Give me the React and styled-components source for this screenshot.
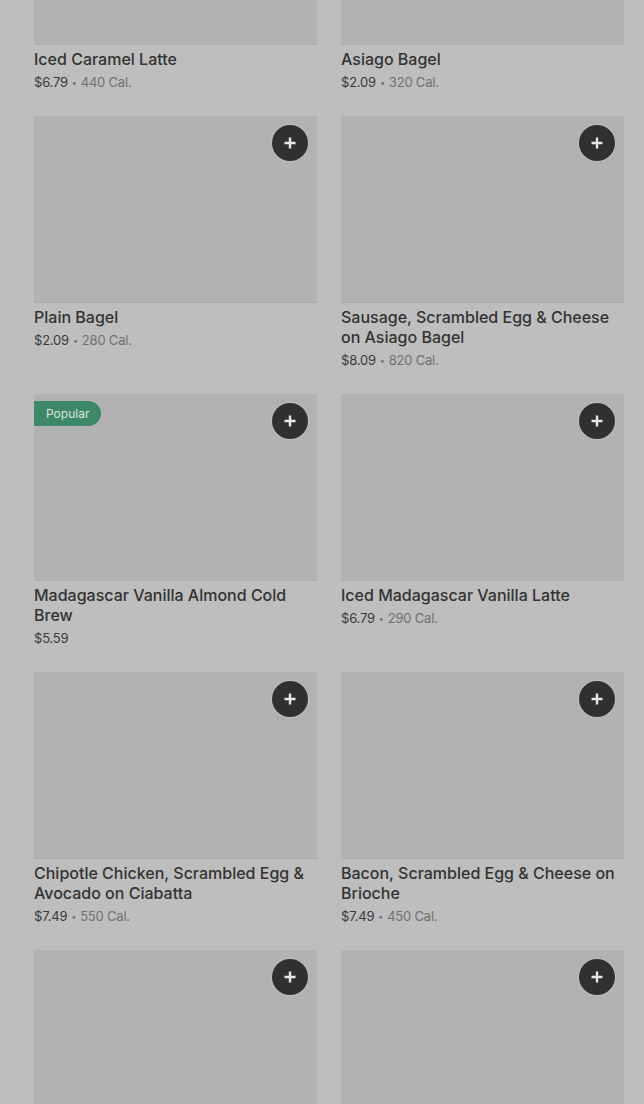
import React from "react";
import styled, { createGlobalStyle } from "styled-components";

const GlobalStyle = createGlobalStyle`
  html, body {
    margin: 0;
    padding: 0;
    background: #bebebe;
    overflow: hidden;
  }
  body {
    font-family: Inter, "Noto Sans", sans-serif;
  }
`;

const Page = styled.div`
  height: 1104px;
  overflow: hidden;
  background: #bebebe;
`;

const Grid = styled.div`
  display: grid;
  grid-template-columns: 283px 283px;
  column-gap: 24px;
  row-gap: 24px;
  padding: 0 20px 0 34px;
  margin-top: -142px;
`;

const Card = styled.div`
  display: flex;
  flex-direction: column;
`;

const Thumb = styled.div`
  position: relative;
  height: 187px;
  background: #b2b2b2;
  box-shadow: inset 0 -1px 0 rgba(0, 0, 0, 0.04);
`;

const Badge = styled.span`
  position: absolute;
  top: 7px;
  left: 0;
  height: 25px;
  padding: 0 12px;
  display: flex;
  align-items: center;
  font-size: 12px;
  color: #d9e6df;
  background: #3d8866;
  border-radius: 0 13px 13px 0;
`;

const AddButton = styled.button`
  position: absolute;
  top: 9px;
  right: 9px;
  width: 36px;
  height: 36px;
  border: none;
  border-radius: 50%;
  background: #303030;
  box-shadow: 0 0 0 1px rgba(255, 255, 255, 0.15);
  display: flex;
  align-items: center;
  justify-content: center;
  padding: 0;
`;

const Title = styled.div`
  margin-top: 4px;
  font-size: 16px;
  line-height: 20px;
  font-weight: 500;
  color: #333;
`;

const Meta = styled.div`
  margin-top: 3px;
  height: 20px;
  display: flex;
  align-items: center;
  font-size: 13px;
  line-height: 20px;
  letter-spacing: -0.2px;
  color: #3a3a3a;
`;

const Cal = styled.span`
  color: #707070;
`;

const Dot = styled.span`
  margin: 0 4px;
  font-size: 9px;
  line-height: 1;
  color: #707070;
`;

const items = [
  { name: "Iced Caramel Latte", price: "$6.79", cal: "440 Cal." },
  { name: "Asiago Bagel", price: "$2.09", cal: "320 Cal." },
  { name: "Plain Bagel", price: "$2.09", cal: "280 Cal." },
  { name: "Sausage, Scrambled Egg & Cheese on Asiago Bagel", price: "$8.09", cal: "820 Cal." },
  { name: "Madagascar Vanilla Almond Cold Brew", price: "$5.59", popular: true },
  { name: "Iced Madagascar Vanilla Latte", price: "$6.79", cal: "290 Cal." },
  { name: "Chipotle Chicken, Scrambled Egg & Avocado on Ciabatta", price: "$7.49", cal: "550 Cal." },
  { name: "Bacon, Scrambled Egg & Cheese on Brioche", price: "$7.49", cal: "450 Cal." },
  { name: "", price: "" },
  { name: "", price: "" },
];

const Plus = () => (
  <svg width="14" height="14" viewBox="0 0 14 14">
    <path d="M7 1.5v11M1.5 7h11" stroke="#e6e6e6" strokeWidth="2.4" />
  </svg>
);

const App = () => {
  return (
    <>
      <GlobalStyle />
      <Page>
        <Grid>
          {items.map((item, i) => (
            <Card key={i}>
              <Thumb>
                {item.popular && <Badge>Popular</Badge>}
                {i > 1 && (
                  <AddButton>
                    <Plus />
                  </AddButton>
                )}
              </Thumb>
              {item.name && <Title>{item.name}</Title>}
              {item.price && (
                <Meta>
                  <span>{item.price}</span>
                  {item.cal && (
                    <>
                      <Dot>•</Dot>
                      <Cal>{item.cal}</Cal>
                    </>
                  )}
                </Meta>
              )}
            </Card>
          ))}
        </Grid>
      </Page>
    </>
  );
};

export default App;
